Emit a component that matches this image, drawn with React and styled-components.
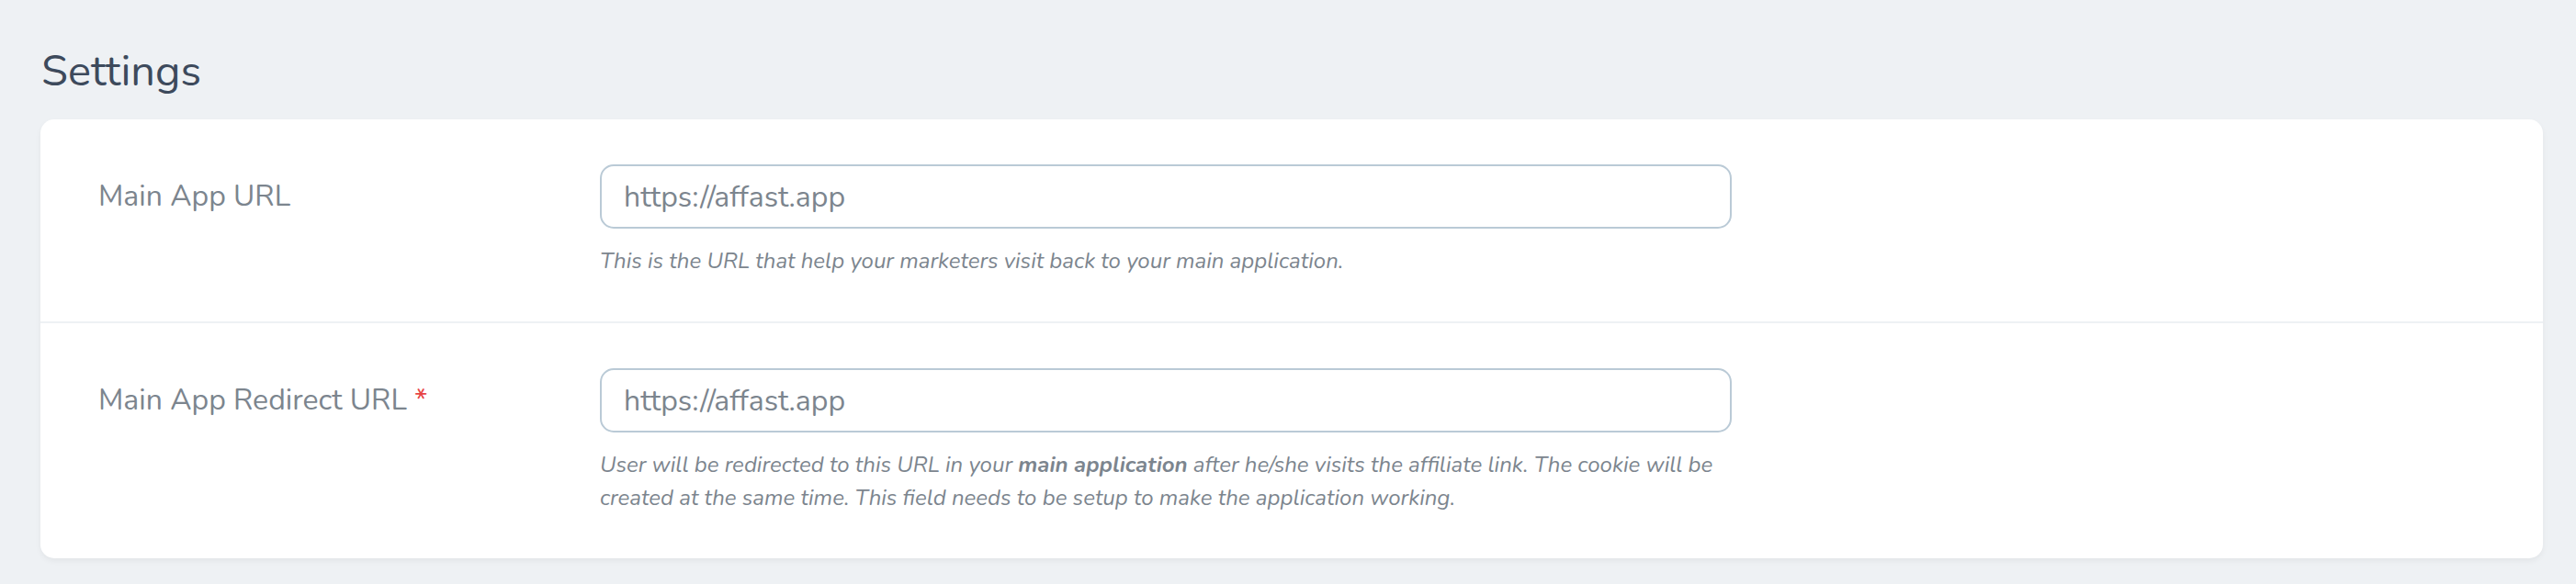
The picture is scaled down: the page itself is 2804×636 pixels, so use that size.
import React from 'react';
import styled, { createGlobalStyle } from 'styled-components';

const GlobalStyle = createGlobalStyle`
	body {
		margin: 0;
		background: #eef1f4;
		font-family: 'Nunito', 'Lato', 'Noto Sans', sans-serif;
	}
`;

const Page = styled.div`
	padding: 50px 36px 28px 44px;
`;

const Heading = styled.h1`
	margin: 0 0 0 1px;
	font-size: 47px;
	font-weight: 400;
	line-height: 56px;
	color: #3d4a5c;
`;

const Card = styled.div`
	margin-top: 24px;
	background: #fff;
	border-radius: 15px;
	box-shadow: 0 3px 6px 0 rgba(0, 0, 0, 0.05);
`;

const Row = styled.div`
	display: flex;
	padding: 49px 0 48px;
	border-bottom: ${(p) => (p.last ? 'none' : '2px solid #eef1f4')};
`;

const LabelCol = styled.div`
	width: 609px;
	box-sizing: border-box;
	padding-left: 63px;
`;

const Label = styled.label`
	font-size: 32px;
	line-height: 70px;
	color: #7c858e;
`;

const Required = styled.span`
	margin-left: 8px;
	color: #e74444;
`;

const FieldCol = styled.div`
	width: 1232px;
`;

const Input = styled.input`
	display: block;
	width: 100%;
	height: 70px;
	box-sizing: border-box;
	padding: 0 24px;
	border: 2px solid #bacad6;
	border-radius: 15px;
	font-family: inherit;
	font-size: 32px;
	color: #7c858e;
	background: #fff;
	outline: none;
`;

const Help = styled.p`
	margin: 17px 0 0;
	font-size: 24px;
	line-height: 36px;
	font-style: italic;
	color: #7c858e;

	b {
		font-weight: 700;
	}
`;

const App = () => {
	return (
		<>
			<GlobalStyle />
			<Page>
				<Heading>Settings</Heading>
				<Card>
					<Row>
						<LabelCol>
							<Label>Main App URL</Label>
						</LabelCol>
						<FieldCol>
							<Input defaultValue="https://affast.app" />
							<Help>This is the URL that help your marketers visit back to your main application.</Help>
						</FieldCol>
					</Row>
					<Row last>
						<LabelCol>
							<Label>
								Main App Redirect URL<Required>*</Required>
							</Label>
						</LabelCol>
						<FieldCol>
							<Input defaultValue="https://affast.app" />
							<Help>
								User will be redirected to this URL in your <b>main application</b> after he/she visits the
								affiliate link. The cookie will be created at the same time. This field needs to be setup to
								make the application working.
							</Help>
						</FieldCol>
					</Row>
				</Card>
			</Page>
		</>
	);
};

export default App;
